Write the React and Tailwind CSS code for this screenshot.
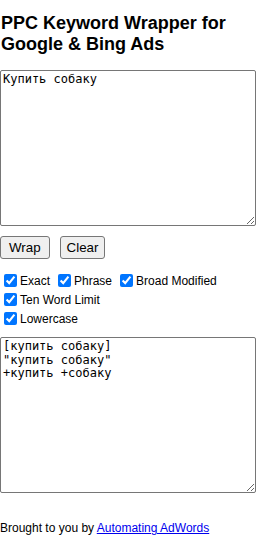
export default function App() {
  return (
    <div className="bg-white text-black text-[12px] leading-normal" style={{ fontFamily: '"Liberation Sans", Arial, sans-serif' }}>
      <h3 className="text-[18px] font-bold leading-[21px] pt-[13px] pl-px">
        PPC Keyword Wrapper for
        <br />
        Google &amp; Bing Ads
      </h3>
      <div className="mt-[15px] flex flex-col">
        <textarea
          className="w-[256px] h-[156px] border border-[#767676] rounded-[2px] p-[2px] text-[12px] leading-[13.5px] resize"
          style={{ fontFamily: '"DejaVu Sans Mono", monospace' }}
          defaultValue="Купить собаку"
        />
        <div className="flex gap-[10px] mt-[10px]">
          <button className="bg-[#efefef] border border-[#767676] rounded-[3px] h-[23px] px-[8px] text-[13.33px] leading-none">
            Wrap
          </button>
          <button className="bg-[#efefef] border border-[#767676] rounded-[3px] h-[23px] px-[6px] text-[13.33px] leading-none">
            Clear
          </button>
        </div>
        <div className="mt-[12px] flex flex-wrap items-center">
          <label className="flex items-center mr-[4px]">
            <input type="checkbox" defaultChecked className="w-[13px] h-[13px] m-[3px] ml-[4px]" />
            <span>Exact</span>
          </label>
          <label className="flex items-center mr-[4px]">
            <input type="checkbox" defaultChecked className="w-[13px] h-[13px] m-[3px] ml-[4px]" />
            <span>Phrase</span>
          </label>
          <label className="flex items-center">
            <input type="checkbox" defaultChecked className="w-[13px] h-[13px] m-[3px] ml-[4px]" />
            <span>Broad Modified</span>
          </label>
        </div>
        <label className="flex items-center">
          <input type="checkbox" defaultChecked className="w-[13px] h-[13px] m-[3px] ml-[4px]" />
          <span>Ten Word Limit</span>
        </label>
        <label className="flex items-center">
          <input type="checkbox" defaultChecked className="w-[13px] h-[13px] m-[3px] ml-[4px]" />
          <span>Lowercase</span>
        </label>
        <textarea
          className="mt-[9px] w-[256px] h-[156px] border border-[#767676] rounded-[2px] p-[2px] text-[12px] leading-[13.5px] resize"
          style={{ fontFamily: '"DejaVu Sans Mono", monospace' }}
          defaultValue={'[купить собаку]\n"купить собаку"\n+купить +собаку'}
        />
        <p className="mt-[26px]">
          Brought to you by{' '}
          <a href="#" className="text-[#0000ee] underline">Automating AdWords</a>
        </p>
      </div>
    </div>
  );
}
